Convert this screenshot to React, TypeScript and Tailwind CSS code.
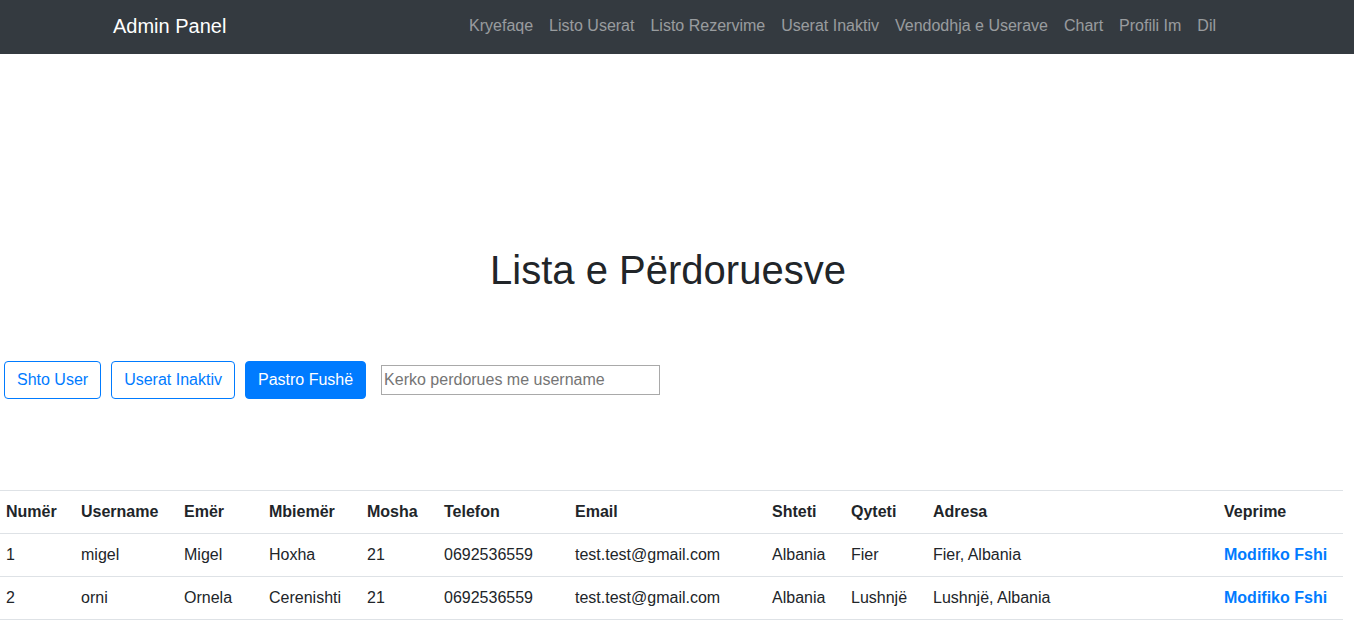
import React from 'react';

const links = ['Kryefaqe', 'Listo Userat', 'Listo Rezervime', 'Userat Inaktiv', 'Vendodhja e Userave', 'Chart', 'Profili Im', 'Dil'];

const cols = [
  { label: 'Numër', w: 'w-[75px]' },
  { label: 'Username', w: 'w-[103px]' },
  { label: 'Emër', w: 'w-[85px]' },
  { label: 'Mbiemër', w: 'w-[98px]' },
  { label: 'Mosha', w: 'w-[77px]' },
  { label: 'Telefon', w: 'w-[131px]' },
  { label: 'Email', w: 'w-[197px]' },
  { label: 'Shteti', w: 'w-[79px]' },
  { label: 'Qyteti', w: 'w-[82px]' },
  { label: 'Adresa', w: 'w-[291px]' },
  { label: 'Veprime', w: 'w-[125px]' },
];

const users = [
  ['1', 'migel', 'Migel', 'Hoxha', '21', '0692536559', 'test.test@gmail.com', 'Albania', 'Fier', 'Fier, Albania'],
  ['2', 'orni', 'Ornela', 'Cerenishti', '21', '0692536559', 'test.test@gmail.com', 'Albania', 'Lushnjë', 'Lushnjë, Albania'],
];

const App = () => {
  return (
    <div className="min-h-[1190px] bg-white text-[#212529] font-['Liberation_Sans',Arial,sans-serif] text-[16px] leading-6">
      <nav className="h-[54px] pb-[2px] bg-[#343a40] flex items-center">
        <div className="ml-[113px] w-[1111px] flex items-center justify-between">
          <a className="text-white text-[20px] leading-[30px]">Admin Panel</a>
          <ul className="flex">
            {links.map((l) => (
              <li key={l}>
                <a className="px-2 text-white/50">{l}</a>
              </li>
            ))}
          </ul>
        </div>
      </nav>

      <h1 className="w-[1336px] mt-[192px] text-center text-[40px] leading-[48px] font-normal">Lista e Përdoruesve</h1>

      <div className="mt-[67px] ml-[4px] flex items-center">
        <button className="border border-[#007bff] text-[#007bff] rounded px-3 py-[6px]">Shto User</button>
        <button className="ml-[10px] border border-[#007bff] text-[#007bff] rounded px-3 py-[6px]">Userat Inaktiv</button>
        <button className="ml-[10px] border border-[#007bff] bg-[#007bff] text-white rounded px-3 py-[6px]">Pastro Fushë</button>
        <input
          className="ml-[15px] w-[279px] h-[30px] border border-[#a9a9a9] px-[2px] placeholder:text-[#757575] outline-none"
          placeholder="Kerko perdorues me username"
        />
      </div>

      <table className="mt-[91px] w-[1343px] table-fixed border-collapse text-left">
        <thead>
          <tr>
            {cols.map((c) => (
              <th key={c.label} className={`${c.w} border-t border-[#dee2e6] px-[6px] py-[9px] font-bold`}>
                {c.label}
              </th>
            ))}
          </tr>
        </thead>
        <tbody>
          {users.map((u) => (
            <tr key={u[0]}>
              {u.map((v, i) => (
                <td key={i} className="border-t border-[#dee2e6] px-[6px] py-[9px]">
                  {v}
                </td>
              ))}
              <td className="border-t border-[#dee2e6] px-[6px] py-[9px] font-bold text-[#007bff] whitespace-nowrap">
                <a>Modifiko</a> <a>Fshi</a>
              </td>
            </tr>
          ))}
          <tr>
            <td colSpan={11} className="border-t border-[#dee2e6]"></td>
          </tr>
        </tbody>
      </table>
    </div>
  );
};

export default App;
